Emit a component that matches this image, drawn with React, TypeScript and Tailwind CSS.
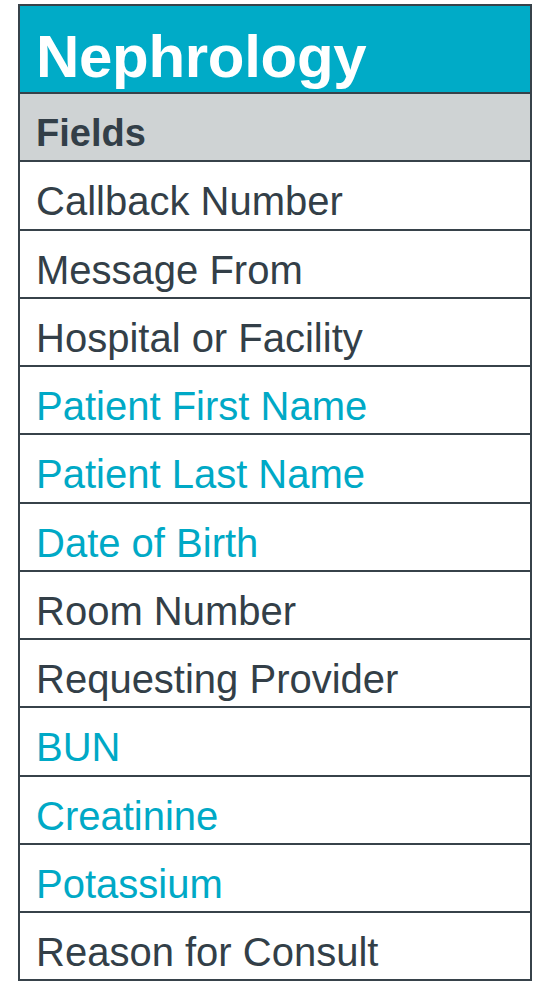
const fields: { label: string; highlight?: boolean }[] = [
  { label: "Callback Number" },
  { label: "Message From" },
  { label: "Hospital or Facility" },
  { label: "Patient First Name", highlight: true },
  { label: "Patient Last Name", highlight: true },
  { label: "Date of Birth", highlight: true },
  { label: "Room Number" },
  { label: "Requesting Provider" },
  { label: "BUN", highlight: true },
  { label: "Creatinine", highlight: true },
  { label: "Potassium", highlight: true },
  { label: "Reason for Consult" },
];

export default function App() {
  return (
    <div
      className="min-h-screen bg-white pt-[4px] pl-[18px]"
      style={{ fontFamily: '"Liberation Sans", Arial, sans-serif' }}
    >
      <div className="w-[514px] border-2 border-[#37424a] flex flex-col">
        <div className="h-[86px] bg-[#00abc7] flex items-center pl-[16px] pt-4">
          <h1 className="text-[60px] font-bold text-white leading-none tracking-[-0.3px]">Nephrology</h1>
        </div>
        <div className="h-[68.25px] bg-[#cfd3d4] border-t-2 border-[#37424a] flex items-center pl-[16px] pt-3">
          <span className="text-[38px] font-bold text-[#333f48]">Fields</span>
        </div>
        {fields.map((f) => (
          <div
            key={f.label}
            className="h-[68.25px] border-t-2 border-[#37424a] flex items-center pl-[16px] pt-3"
          >
            <span className={`text-[40px] ${f.highlight ? "text-[#00a9c6]" : "text-[#333f48]"}`}>
              {f.label}
            </span>
          </div>
        ))}
      </div>
    </div>
  );
}
